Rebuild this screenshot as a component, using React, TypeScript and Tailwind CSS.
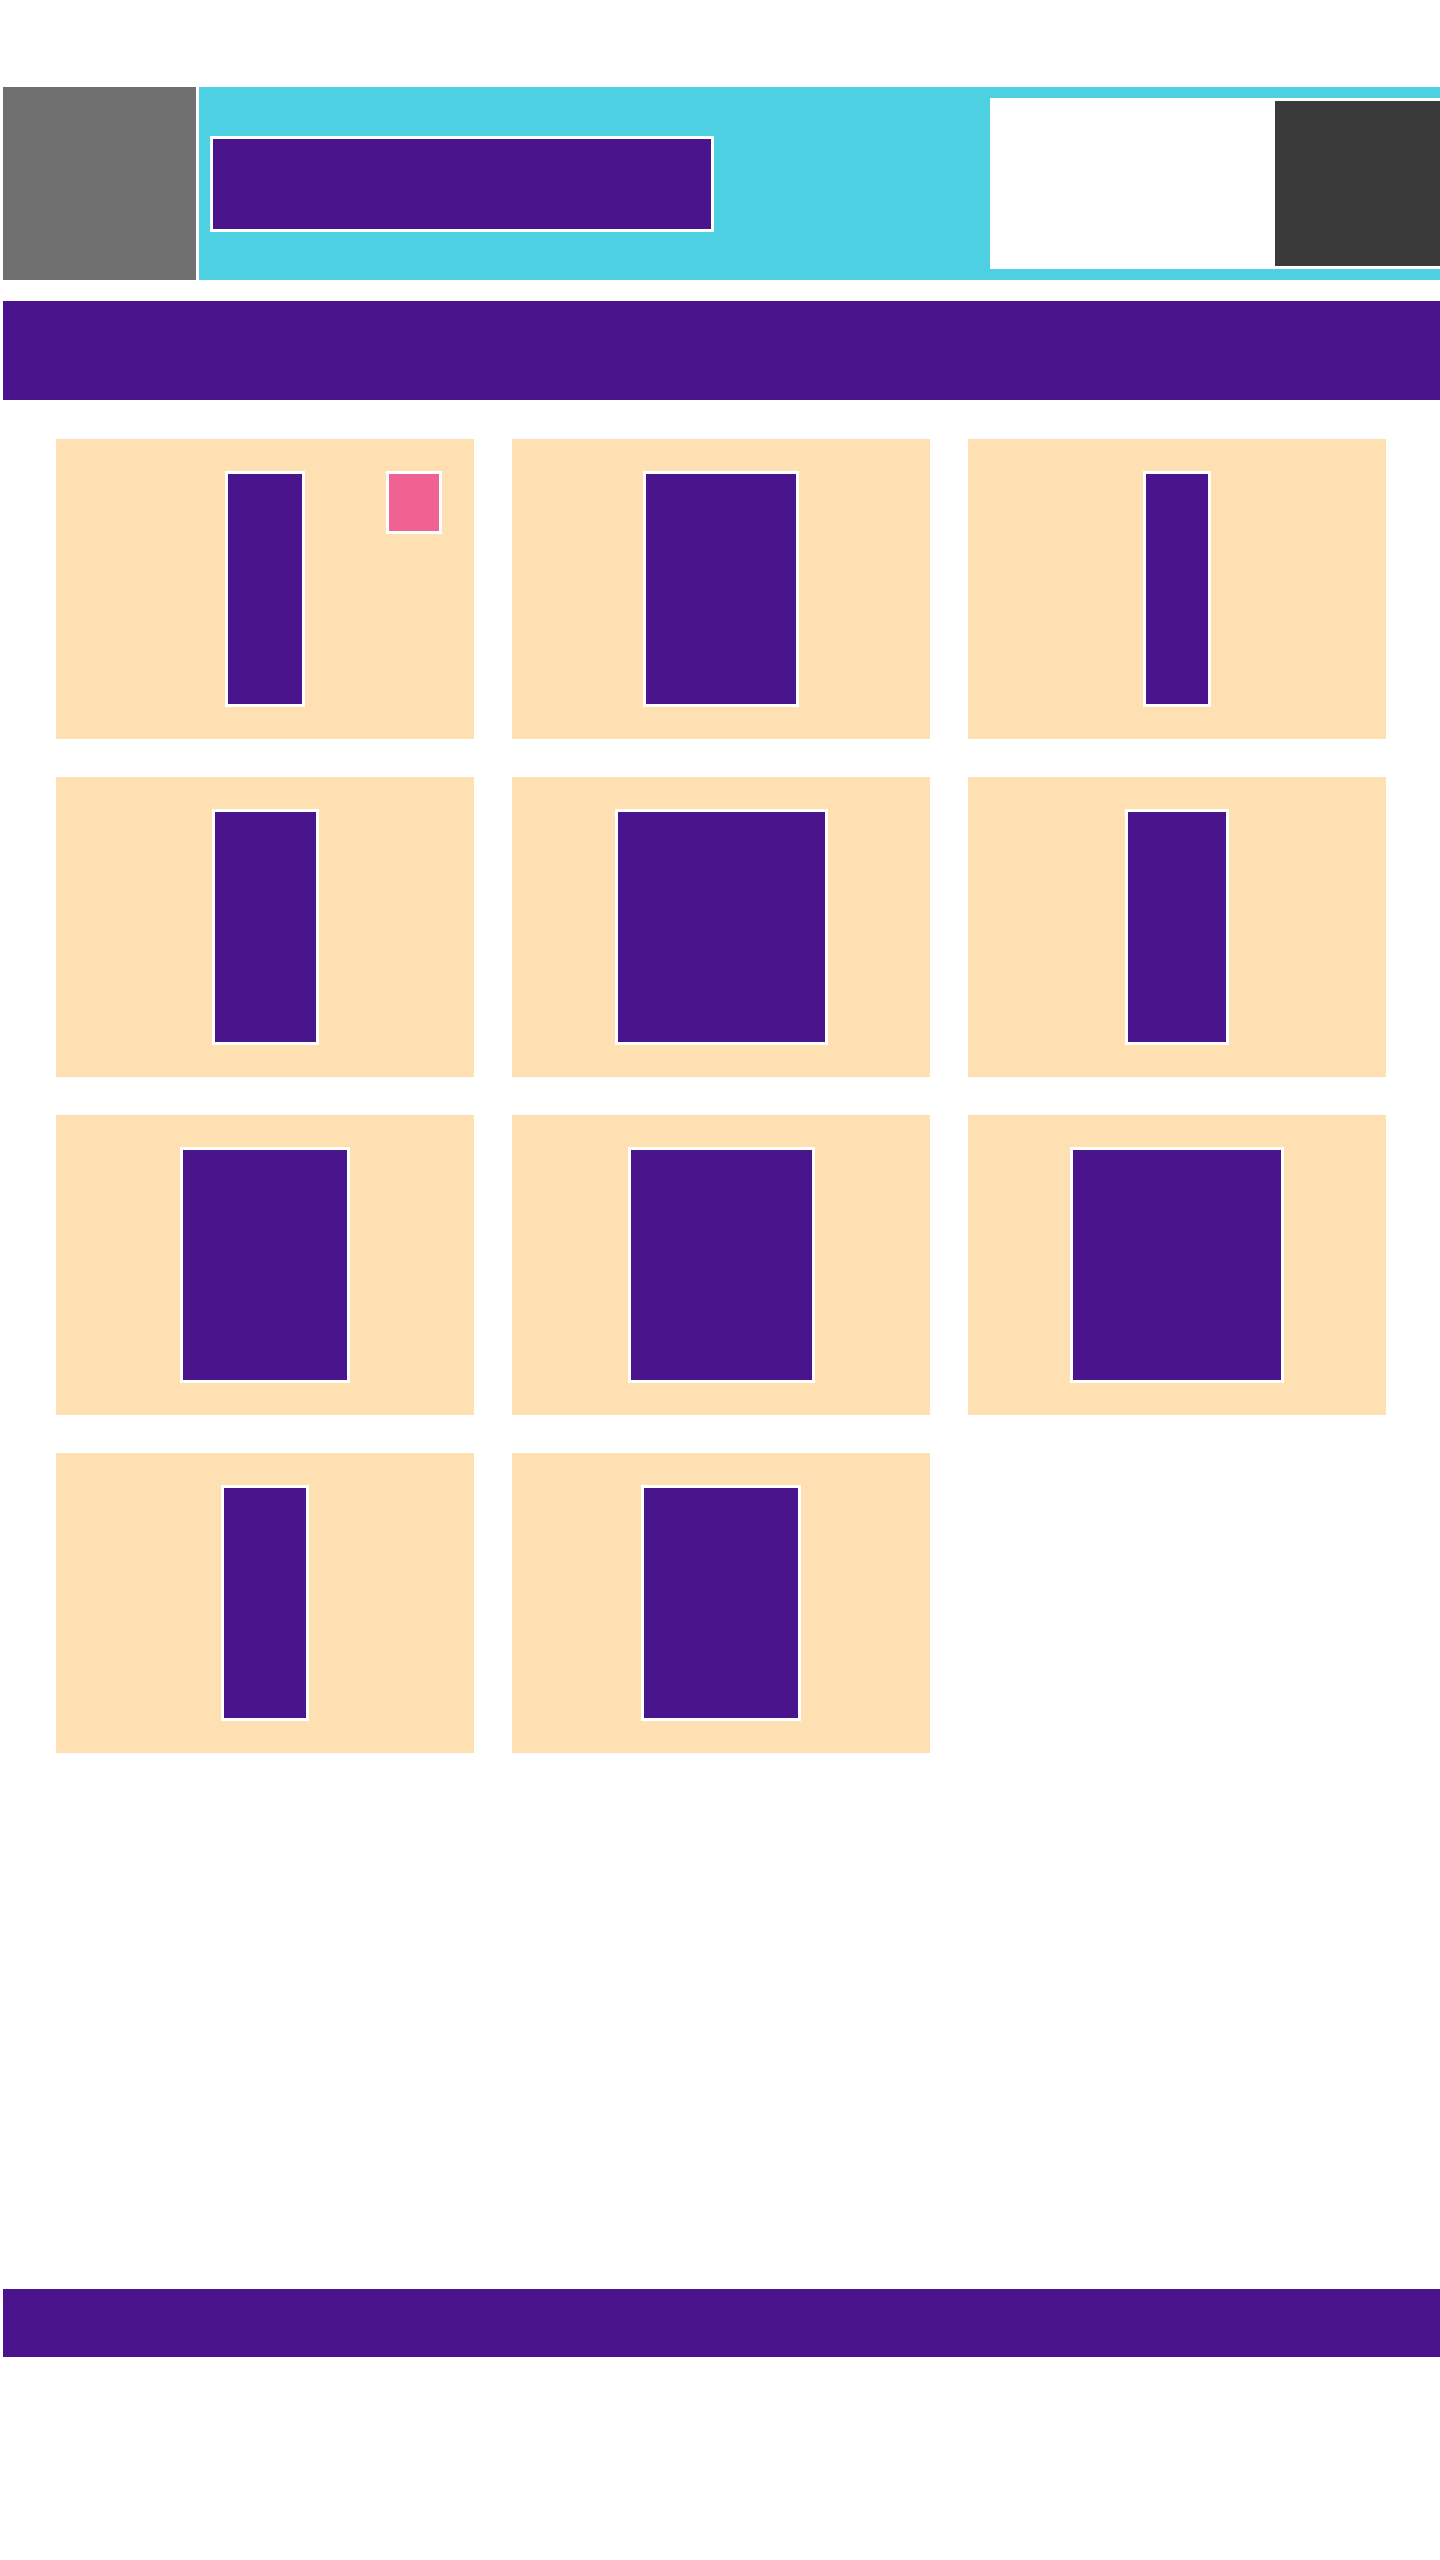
const CARDS = [
  { w: 80, badge: true },
  { w: 156 },
  { w: 68 },
  { w: 107 },
  { w: 213 },
  { w: 104 },
  { w: 170 },
  { w: 187 },
  { w: 214 },
  { w: 88 },
  { w: 160 },
];

function Card({ w, badge }: { w: number; badge?: boolean }) {
  return (
    <div className="relative h-[300px] bg-[#fee0b2] flex justify-center py-[32px]">
      <div
        className="h-[236px] border-[3px] border-white bg-[#4a148c]"
        style={{ width: w }}
      />
      {badge && (
        <div className="absolute top-[32px] right-[32px] w-[56px] h-[63px] border-[3px] border-white bg-[#f06292]" />
      )}
    </div>
  );
}

export default function App() {
  return (
    <div className="min-h-[2560px] bg-white">
      <div className="ml-[3px] pt-[87px]">
        <header className="flex h-[193px] gap-[3px]">
          <div className="w-[193px] shrink-0 bg-[#707070]" />
          <div className="flex flex-1 items-center overflow-hidden bg-[#4dd0e1] pl-[11px]">
            <div className="w-[504px] h-[96px] shrink-0 border-[3px] border-white bg-[#4a148c]" />
            <div className="ml-[276px] h-[171px] shrink-0 bg-white p-[3px] pl-[285px]">
              <div className="w-[165px] h-[165px] bg-[#3a3a3a]" />
            </div>
          </div>
        </header>
        <nav className="mt-[21px] h-[99px] bg-[#4a148c]" />
        <main className="grid grid-cols-3 gap-[38px] pl-[53px] pr-[54px] pt-[39px]">
          {CARDS.map((c, i) => (
            <Card key={i} w={c.w} badge={c.badge} />
          ))}
        </main>
        <footer className="mt-[536px] h-[68px] bg-[#4a148c]" />
      </div>
    </div>
  );
}
